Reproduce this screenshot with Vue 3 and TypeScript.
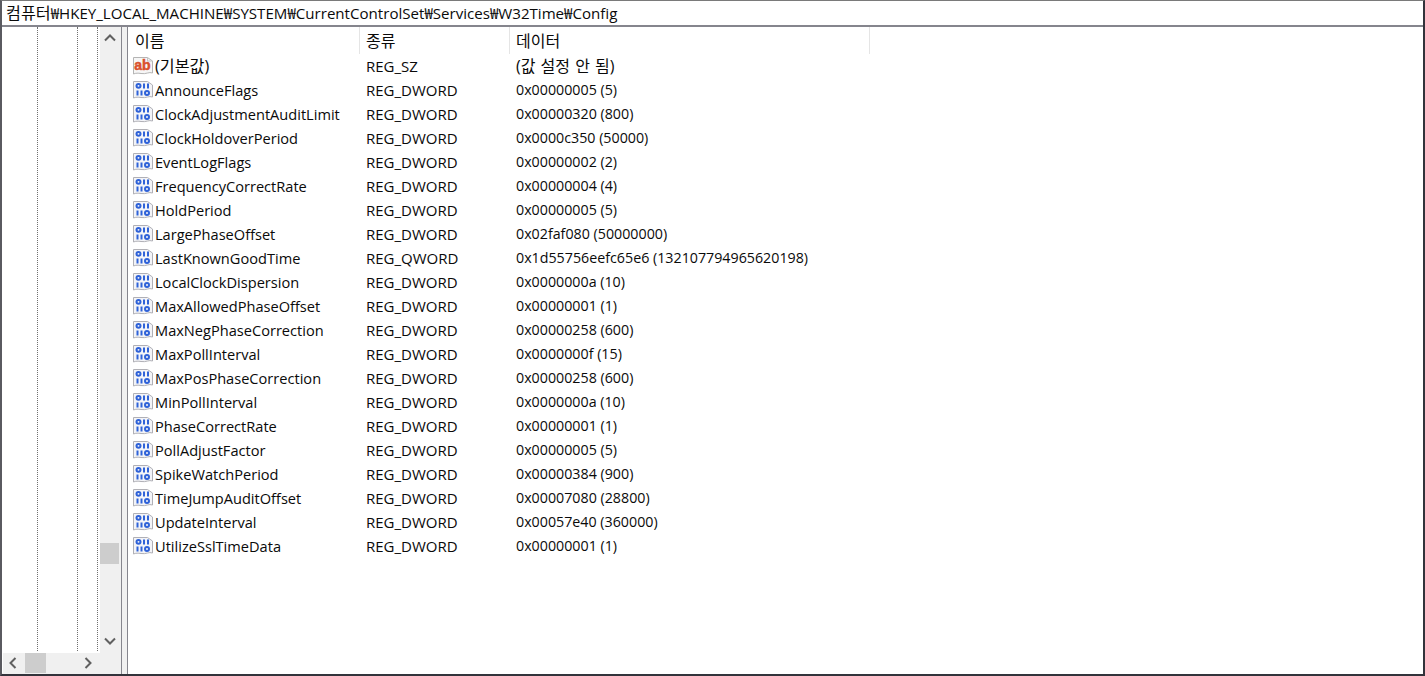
<script setup lang="ts">
interface Row { name: string; type: string; data: string; kind: 'str' | 'bin' }
const dw = (name: string, data: string): Row => ({ name, type: 'REG_DWORD', data, kind: 'bin' })
const rows: Row[] = [
  { name: '(기본값)', type: 'REG_SZ', data: '(값 설정 안 됨)', kind: 'str' },
  dw('AnnounceFlags', '0x00000005 (5)'),
  dw('ClockAdjustmentAuditLimit', '0x00000320 (800)'),
  dw('ClockHoldoverPeriod', '0x0000c350 (50000)'),
  dw('EventLogFlags', '0x00000002 (2)'),
  dw('FrequencyCorrectRate', '0x00000004 (4)'),
  dw('HoldPeriod', '0x00000005 (5)'),
  dw('LargePhaseOffset', '0x02faf080 (50000000)'),
  { name: 'LastKnownGoodTime', type: 'REG_QWORD', data: '0x1d55756eefc65e6 (132107794965620198)', kind: 'bin' },
  dw('LocalClockDispersion', '0x0000000a (10)'),
  dw('MaxAllowedPhaseOffset', '0x00000001 (1)'),
  dw('MaxNegPhaseCorrection', '0x00000258 (600)'),
  dw('MaxPollInterval', '0x0000000f (15)'),
  dw('MaxPosPhaseCorrection', '0x00000258 (600)'),
  dw('MinPollInterval', '0x0000000a (10)'),
  dw('PhaseCorrectRate', '0x00000001 (1)'),
  dw('PollAdjustFactor', '0x00000005 (5)'),
  dw('SpikeWatchPeriod', '0x00000384 (900)'),
  dw('TimeJumpAuditOffset', '0x00007080 (28800)'),
  dw('UpdateInterval', '0x00057e40 (360000)'),
  dw('UtilizeSslTimeData', '0x00000001 (1)'),
]
</script>

<template>
  <div class="win">
    <div class="address"><span class="ko">컴퓨터</span>₩HKEY_LOCAL_MACHINE₩SYSTEM₩CurrentControlSet₩Services₩W32Time₩Config</div>
    <div class="panes">
      <div class="left">
        <div class="left-top">
          <div class="tree">
            <i class="guide g1"></i><i class="guide g2"></i><i class="guide g3"></i>
          </div>
          <div class="vbar">
            <svg class="arrow" width="20" height="20" viewBox="0 0 20 20"><path d="M5 12.500 L10 7.500 L15 12.500" fill="none" stroke="#606060" stroke-width="2"/></svg>
            <div class="track-v"><div class="thumb-v"></div></div>
            <svg class="arrow" width="20" height="20" viewBox="0 0 20 20"><path d="M5 7.500 L10 12.500 L15 7.500" fill="none" stroke="#606060" stroke-width="2"/></svg>
          </div>
        </div>
        <div class="hbar">
          <svg class="arrow" width="20" height="20" viewBox="0 0 20 20"><path d="M12.500 5 L7.500 10 L12.500 15" fill="none" stroke="#606060" stroke-width="2"/></svg>
          <div class="track-h"><div class="thumb-h"></div></div>
          <svg class="arrow" width="20" height="20" viewBox="0 0 20 20"><path d="M7.500 5 L12.500 10 L7.500 15" fill="none" stroke="#606060" stroke-width="2"/></svg>
        </div>
      </div>
      <div class="splitter"></div>
      <div class="right">
        <div class="header">
          <div class="hc c1">이름</div>
          <div class="hc c2">종류</div>
          <div class="hc c3">데이터</div>
        </div>
        <div class="list">
          <div v-for="r in rows" :key="r.name" class="row">
            <div class="c1 namecell">
              <svg v-if="r.kind === 'str'" class="ico" width="20" height="18" viewBox="0 0 20 18">
                <path d="M0.500 0.500 H14.500 L19.500 4 V16 C16 14.500 13 17.500 8 16.500 C5 16 3 16 0.500 17 Z" fill="#f6f6f6" stroke="#b4b4b4"/>
                <path d="M14.500 0.500 V4 H19.500" fill="none" stroke="#c4c4c4"/>
                <text x="9.500" y="13" text-anchor="middle" class="ab">ab</text>
              </svg>
              <svg v-else class="ico" width="20" height="18" viewBox="0 0 20 18">
                <path d="M0.500 0.500 H14.500 L19.500 4 V16 C16 14.500 13 17.500 8 16.500 C5 16 3 16 0.500 17 Z" fill="#f3f4f8" stroke="#b0b0b6"/>
                <g fill="none" stroke="#2f62d8" stroke-width="2">
                  <ellipse cx="5.500" cy="4.800" rx="2" ry="1.900"/>
                  <path d="M11 2.500 V7.500 M15 2.500 V7.500"/>
                  <path d="M4.500 9.500 V14.500 M8.500 9.500 V14.500"/>
                  <ellipse cx="14" cy="12" rx="2" ry="1.900"/>
                </g>
              </svg>
              <span class="name" :class="{ ko: r.kind === 'str' }">{{ r.name }}</span>
            </div>
            <div class="c2 cell type">{{ r.type }}</div>
            <div class="c3 cell data" :class="{ 'ko-data': r.kind === 'str' }">{{ r.data }}</div>
          </div>
        </div>
      </div>
    </div>
  </div>
</template>

<style>
html, body { margin: 0; background: #fff; }
</style>

<style scoped>
.win {
  width: 1425px;
  height: 676px;
  box-sizing: border-box;
  display: flex;
  flex-direction: column;
  background: #fff;
  border-top: 1px solid #7a7a7a;
  border-right: 2px solid #33333b;
  border-bottom: 2px solid #33333b;
  border-left: 2px solid #5a5a60;
  font-family: "Open Sans", "Noto Sans CJK KR", sans-serif;
  font-size: 14.6px;
  color: #0a0a0a;
  overflow: hidden;
}
.address {
  height: 26px;
  line-height: 25px;
  padding-left: 4px;
  flex: none;
  white-space: nowrap;
  box-sizing: border-box;
  border-bottom: 2px solid #85858d;
  font-size: 15.1px;
}
.ko { font-size: 16.2px; }
.panes { flex: 1; display: flex; min-height: 0; }
.left {
  width: 120px;
  flex: none;
  box-sizing: border-box;
  display: flex;
  flex-direction: column;
  border-right: 1px solid #85858d;
  background: #f0f0f0;
}
.left-top { height: 626px; flex: none; display: flex; }
.tree { position: relative; width: 98px; flex: none; background: #fff; }
.guide {
  position: absolute;
  top: 0;
  bottom: 2px;
  width: 0;
  border-left: 1px dotted #707070;
}
.g1 { left: 35px; }
.g2 { left: 75px; }
.g3 { left: 95px; }
.vbar {
  flex: 1;
  background: #f0f0f0;
  display: flex;
  flex-direction: column;
  padding: 1px 0 2px;
}
.arrow { flex: none; display: block; }
.track-v { flex: 1; }
.thumb-v {
  margin-top: 495px;
  width: 19px;
  height: 21px;
  background: #cdcdcd;
}
.hbar {
  height: 20px;
  flex: none;
  display: flex;
  background: #f0f0f0;
  border-left: 1px solid #fff;
}
.track-h { width: 55px; flex: none; padding-left: 2px; box-sizing: border-box; }
.thumb-h {
  width: 21px;
  height: 20px;
  background: #cdcdcd;
}
.splitter { width: 5px; flex: none; background: #f0f0f0; }
.right {
  flex: 1;
  min-width: 0;
  border-left: 1px solid #85858d;
  padding-left: 1px;
}
.header { display: flex; height: 27px; font-size: 16px; }
.hc {
  box-sizing: border-box;
  height: 27px;
  line-height: 29px;
  border-right: 1px solid #e5e5e5;
  padding-left: 6px;
}
.c1 { width: 231px; flex: none; box-sizing: border-box; }
.c2 { width: 150px; flex: none; box-sizing: border-box; }
.c3 { width: 360px; flex: none; box-sizing: border-box; }
.row { display: flex; height: 24px; line-height: 24px; white-space: nowrap; }
.namecell { display: flex; align-items: center; padding-left: 4px; }
.ico { flex: none; margin-right: 2px; }
.ab { font: bold 14px "Liberation Sans", sans-serif; fill: #d9502c; stroke: #d9502c; stroke-width: 0.5px; }
.cell { padding-left: 6px; }
.type { font-size: 15px; }
.data { font-size: 14.25px; }
.ko-data { font-size: 16px; word-spacing: 1px; }
</style>
